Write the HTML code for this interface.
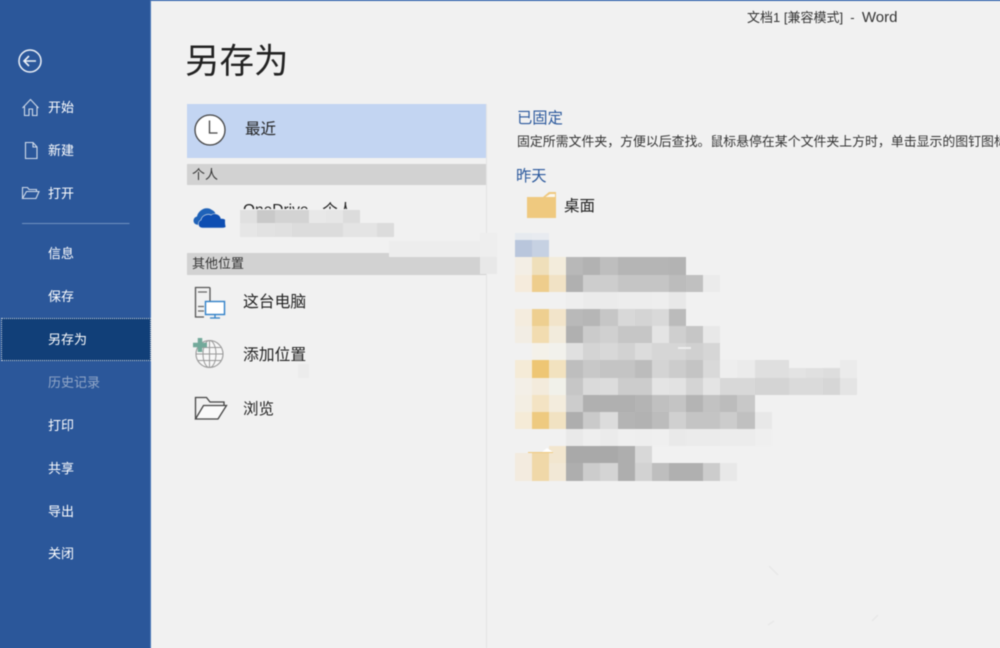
<!DOCTYPE html>
<html lang="zh">
<head>
<meta charset="utf-8">
<title>另存为</title>
<style>
html,body{margin:0;padding:0;width:1000px;height:648px;overflow:hidden;background:#f1f1f1}
body{font-family:"Liberation Sans","Noto Sans CJK SC",sans-serif;position:relative}
#root{position:absolute;left:0;top:0;width:1000px;height:648px;filter:blur(.4px);background:#f1f1f1}
.a{position:absolute;white-space:nowrap}
.n{position:absolute;left:48px;font-size:13px;line-height:20px;color:#fff}
svg{position:absolute;overflow:visible}
</style>
</head>
<body>
<div id="root">
<div class="a" style="left:-10px;top:-10px;width:1020px;height:11px;background:#3f6db0"></div>
<div class="a" style="left:-10px;top:-10px;width:161px;height:668px;background:#2b579a"></div>
<div class="a" style="left:150px;top:0;width:1px;height:658px;background:#4a78b8"></div>

<svg style="left:0;top:0" width="151" height="240" fill="none" stroke="#eef2f8">
<circle cx="30" cy="61" r="11" stroke-width="1.500"/>
<path d="M36 61H24.500M29 56l-5 5 5 5" stroke-width="1.600"/>
<path d="M22.500 108l8-8.500 8 8.500M24.500 106.500v9h4.500v-6.500h3.500v6.500h4.500v-9" stroke="#d2dcea" stroke-width="1.100"/>
<path d="M25.500 142.500h7.500l4 4.500v11.500h-11.500zM33 142.500v4.500h4" stroke="#d2dcea" stroke-width="1.100"/>
<path d="M22.500 198.500v-11h5l1.500 2h7.500v2M22.500 198.500l4-7h12.500l-3 7z" stroke="#d2dcea" stroke-width="1.100"/>
<path d="M22 223.500h107.500" stroke="#6f91c0" stroke-width="1"/>
</svg>

<div class="n" style="top:98px">开始</div>
<div class="n" style="top:141px">新建</div>
<div class="n" style="top:184px">打开</div>
<div class="n" style="top:244px">信息</div>
<div class="n" style="top:287px">保存</div>
<div class="a" style="left:1px;top:318px;width:148px;height:41px;background:#113f78;border:1px dotted #d6dde6"></div>
<div class="n" style="top:330px">另存为</div>
<div class="n" style="top:373px;color:#93a8c8">历史记录</div>
<div class="n" style="top:416px">打印</div>
<div class="n" style="top:459px">共享</div>
<div class="n" style="top:502px">导出</div>
<div class="n" style="top:544px">关闭</div>

<div class="a" style="left:747px;top:8px;font-size:13px;line-height:20px;color:#333">文档1 [兼容模式]&nbsp; -&nbsp; <span style="font-size:15px">Word</span></div>
<div class="a" style="left:185px;top:37px;font-size:34.500px;line-height:50px;color:#222">另存为</div>

<div class="a" style="left:486px;top:104px;width:1px;height:554px;background:#e4e4e4"></div>

<div class="a" style="left:187px;top:104px;width:299px;height:54px;background:#c3d5f2"></div>
<svg style="left:187px;top:104px" width="50" height="54" fill="none">
<circle cx="23" cy="26" r="15" fill="#fff" stroke="#444" stroke-width="1.300"/>
<path d="M22.500 16.500v12.500h8" stroke="#444" stroke-width="1.300"/>
</svg>
<div class="a" style="left:245px;top:119px;font-size:15.500px;line-height:22px;color:#222">最近</div>

<div class="a" style="left:187px;top:164px;width:299px;height:21px;background:#d2d2d2"></div>
<div class="a" style="left:192px;top:165px;font-size:13px;line-height:20px;color:#333">个人</div>

<svg style="left:193px;top:207px" width="36" height="22">
<path d="M3.500 17.500C-.5 16.500-.5 10.500 4 9.500 5 3.500 13-1.500 19 3c2 1 3 2 3.500 4L9 19z" fill="#1f62b8"/>
<path d="M9.500 21C4.500 21 4 14.500 8 13c.5-4 6-7 10-5 3-2.500 9-1 10 3.500 4.500-.5 7 3 6 6.500-.5 2-2 3-4 3z" fill="#0e4eb2" stroke="#f1f1f1" stroke-width=".6"/>
</svg>
<div class="a" style="left:243px;top:200px;font-size:15.500px;line-height:22px;color:#222">OneDrive - 个人</div>

<div class="a" style="left:187px;top:253px;width:299px;height:22px;background:#d2d2d2"></div>
<div class="a" style="left:192px;top:254px;font-size:13px;line-height:20px;color:#333">其他位置</div>

<svg style="left:190px;top:284px" width="40" height="36" fill="none">
<path d="M14 33H5.500V3.500h13.500a1 1 0 0 1 1 1V17" stroke="#555" stroke-width="1.300"/>
<path d="M8 8h9M8 22.500h6M8 27h6" stroke="#666" stroke-width="1.200"/>
<rect x="15.500" y="17.500" width="19" height="13" fill="#fff" stroke="#2f80c8" stroke-width="1.400"/>
<path d="M25 31v2.500M20 34h10" stroke="#2f80c8" stroke-width="1.300"/>
</svg>
<div class="a" style="left:243px;top:292px;font-size:15.800px;line-height:22px;color:#222">这台电脑</div>

<svg style="left:190px;top:335px" width="44" height="36" fill="none">
<circle cx="19.500" cy="19" r="13.500" fill="#f7f7f7" stroke="#999" stroke-width="1.100"/>
<ellipse cx="19.500" cy="19" rx="6.500" ry="13.500" stroke="#999"/>
<path d="M19.500 5.500v27M6 19h27M8 12.500h23M8 25.500h23" stroke="#999"/>
<path d="M10 3v14M3 10h14" stroke="#72a99a" stroke-width="4.500"/>
</svg>
<div class="a" style="left:243px;top:345px;font-size:15.800px;line-height:22px;color:#222">添加位置</div>

<svg style="left:190px;top:392px" width="44" height="32" fill="none" stroke="#444" stroke-width="1.300">
<path d="M5.500 26.500V5.500h11l3.500 4.500h14v3"/>
<path d="M13.500 13.500h23l-8.500 13.500H5.500z" fill="#fafafa"/>
</svg>
<div class="a" style="left:243px;top:399px;font-size:15.500px;line-height:22px;color:#222">浏览</div>

<div class="a" style="left:517px;top:108px;font-size:15.300px;line-height:22px;color:#2a589c">已固定</div>
<div class="a" style="left:517px;top:132px;font-size:12.900px;line-height:20px;color:#333">固定所需文件夹，方便以后查找。鼠标悬停在某个文件夹上方时，单击显示的图钉图标</div>
<div class="a" style="left:516px;top:166px;font-size:15.300px;line-height:22px;color:#2a589c">昨天</div>
<svg style="left:527px;top:192px" width="30" height="27">
<path d="M0 5h16l6-5h7v26H0z" fill="#efc97f"/>
<path d="M18.500 5l4.500-3h5v3z" fill="#fbf7ee"/>
</svg>
<div class="a" style="left:564px;top:196px;font-size:15.500px;line-height:22px;color:#222">桌面</div>

<!-- smudges -->
<svg style="left:0;top:0" width="1000" height="648" shape-rendering="crispEdges">
<path d="M240 209h155v28h-120c-20 0-40-1-42-5-5-1-8-3-8-10 0-8 8-13 15-13z" fill="#f1f1f1" shape-rendering="auto"/>
<path d="M395 238l-30-1 24 3z" fill="#f1f1f1" shape-rendering="auto"/>
<rect x="240" y="210" width="17" height="13" fill="#e0e0e0"/><rect x="257" y="210" width="18" height="13" fill="#c9c9c9"/><rect x="275" y="210" width="17" height="13" fill="#d3d3d3"/><rect x="292" y="210" width="17" height="13" fill="#d3d3d3"/><rect x="309" y="210" width="17" height="13" fill="#e8e8e8"/><rect x="326" y="210" width="17" height="13" fill="#e6e6e6"/><rect x="343" y="210" width="17" height="13" fill="#dcdcdc"/>
<rect x="240" y="223" width="17" height="14" fill="#e6e6e6"/><rect x="257" y="223" width="18" height="14" fill="#e2e2e2"/><rect x="275" y="223" width="17" height="14" fill="#e0e0e0"/><rect x="292" y="223" width="17" height="14" fill="#dcdcdc"/><rect x="309" y="223" width="17" height="14" fill="#dcdcdc"/><rect x="326" y="223" width="17" height="14" fill="#dcdcdc"/><rect x="343" y="223" width="17" height="14" fill="#e4e4e4"/><rect x="360" y="223" width="17" height="14" fill="#e4e4e4"/><rect x="377" y="223" width="17" height="14" fill="#dcdcdc"/>
<rect x="389" y="241" width="91" height="16" fill="#ededed"/>
<rect x="480" y="233" width="17" height="24" fill="#eeeeee"/>
<rect x="480" y="257" width="17" height="17" fill="#e8e8e8"/>
<rect x="298" y="364" width="11" height="14" fill="#ececec"/>

<!-- mosaic -->
<rect x="515" y="233" width="17" height="7" fill="#e6eaef"/><rect x="532" y="233" width="17" height="7" fill="#e8ebf0"/>
<rect x="515" y="240" width="17" height="17" fill="#b9c6dc"/><rect x="532" y="240" width="17" height="17" fill="#c6d1e2"/>

<g id="r1">
<rect x="515" y="257" width="17" height="18" fill="#f3eee5"/><rect x="532" y="257" width="17" height="18" fill="#efdfba"/><rect x="549" y="257" width="17" height="18" fill="#f3ecdc"/><rect x="566" y="257" width="17" height="18" fill="#b8b8b8"/><rect x="583" y="257" width="17" height="18" fill="#b2b2b2"/><rect x="600" y="257" width="18" height="18" fill="#bebebe"/><rect x="618" y="257" width="17" height="18" fill="#b5b5b5"/><rect x="635" y="257" width="17" height="18" fill="#b5b5b5"/><rect x="652" y="257" width="17" height="18" fill="#b5b5b5"/><rect x="669" y="257" width="17" height="18" fill="#b3b3b3"/>
<rect x="515" y="275" width="17" height="17" fill="#f5ebdc"/><rect x="532" y="275" width="17" height="17" fill="#eecd8c"/><rect x="549" y="275" width="17" height="17" fill="#f1e2c5"/><rect x="566" y="275" width="17" height="17" fill="#b0b0b0"/><rect x="583" y="275" width="17" height="17" fill="#cdcdcd"/><rect x="600" y="275" width="18" height="17" fill="#cdcdcd"/><rect x="618" y="275" width="17" height="17" fill="#c5c5c5"/><rect x="635" y="275" width="17" height="17" fill="#c5c5c5"/><rect x="652" y="275" width="17" height="17" fill="#c5c5c5"/><rect x="669" y="275" width="17" height="17" fill="#bcbcbc"/><rect x="686" y="275" width="17" height="17" fill="#c0c0c0"/><rect x="703" y="275" width="17" height="17" fill="#ebebeb"/>
<rect x="566" y="292" width="17" height="17" fill="#eeeeee"/><rect x="583" y="292" width="17" height="17" fill="#ebebeb"/><rect x="600" y="292" width="18" height="17" fill="#ebebeb"/><rect x="618" y="292" width="17" height="17" fill="#ededed"/><rect x="635" y="292" width="17" height="17" fill="#ededed"/><rect x="652" y="292" width="17" height="17" fill="#eeeeee"/><rect x="669" y="292" width="17" height="17" fill="#e8e8e8"/>
<rect x="515" y="309" width="17" height="17" fill="#f4ecde"/><rect x="532" y="309" width="17" height="17" fill="#eecf90"/><rect x="549" y="309" width="17" height="17" fill="#f2e4ca"/><rect x="566" y="309" width="17" height="17" fill="#b9b9b9"/><rect x="583" y="309" width="17" height="17" fill="#b6b6b6"/><rect x="600" y="309" width="18" height="17" fill="#c6c6c6"/><rect x="618" y="309" width="17" height="17" fill="#d8d8d8"/><rect x="635" y="309" width="17" height="17" fill="#d4d4d4"/><rect x="652" y="309" width="17" height="17" fill="#d9d9d9"/><rect x="669" y="309" width="17" height="17" fill="#bbbbbb"/>
<rect x="515" y="326" width="17" height="17" fill="#f2ede4"/><rect x="532" y="326" width="17" height="17" fill="#f2dcb0"/><rect x="549" y="326" width="17" height="17" fill="#f2ebdc"/><rect x="566" y="326" width="17" height="17" fill="#b0b0b0"/><rect x="583" y="326" width="17" height="17" fill="#cbcbcb"/><rect x="600" y="326" width="18" height="17" fill="#d0d0d0"/><rect x="618" y="326" width="17" height="17" fill="#c6c6c6"/><rect x="635" y="326" width="17" height="17" fill="#c6c6c6"/><rect x="652" y="326" width="17" height="17" fill="#e4e4e4"/><rect x="669" y="326" width="17" height="17" fill="#cfcfcf"/><rect x="686" y="326" width="17" height="17" fill="#c6c6c6"/><rect x="703" y="326" width="17" height="17" fill="#e8e8e8"/>
<rect x="532" y="343" width="17" height="17" fill="#f4f1e9"/><rect x="549" y="343" width="17" height="17" fill="#f2f1ec"/><rect x="566" y="343" width="17" height="17" fill="#e0e0e0"/><rect x="583" y="343" width="17" height="17" fill="#d4d4d4"/><rect x="600" y="343" width="18" height="17" fill="#d8d8d8"/><rect x="618" y="343" width="17" height="17" fill="#d2d2d2"/><rect x="635" y="343" width="17" height="17" fill="#dcdcdc"/><rect x="652" y="343" width="17" height="17" fill="#d6d6d6"/><rect x="669" y="343" width="17" height="17" fill="#d6d6d6"/><rect x="686" y="343" width="17" height="17" fill="#d0d0d0"/><rect x="703" y="343" width="17" height="17" fill="#d6d6d6"/>
<rect x="678" y="347" width="13" height="2" fill="#ececec"/>
<rect x="515" y="360" width="17" height="18" fill="#f5ebd7"/><rect x="532" y="360" width="17" height="18" fill="#eec674"/><rect x="549" y="360" width="17" height="18" fill="#f2e2bf"/><rect x="566" y="360" width="17" height="18" fill="#bebebe"/><rect x="583" y="360" width="17" height="18" fill="#c8c8c8"/><rect x="600" y="360" width="18" height="18" fill="#c4c4c4"/><rect x="618" y="360" width="17" height="18" fill="#c4c4c4"/><rect x="635" y="360" width="17" height="18" fill="#bcbcbc"/><rect x="652" y="360" width="17" height="18" fill="#d4d4d4"/><rect x="669" y="360" width="17" height="18" fill="#cccccc"/><rect x="686" y="360" width="17" height="18" fill="#c4c4c4"/><rect x="703" y="360" width="17" height="18" fill="#d9d9d9"/><rect x="720" y="360" width="17" height="18" fill="#eeeeee"/><rect x="737" y="360" width="18" height="18" fill="#ebebeb"/><rect x="755" y="360" width="17" height="18" fill="#dfdfdf"/><rect x="772" y="360" width="17" height="18" fill="#dfdfdf"/><rect x="789" y="368" width="17" height="10" fill="#e3e3e3"/><rect x="806" y="368" width="17" height="10" fill="#e0e0e0"/><rect x="823" y="368" width="17" height="10" fill="#dddddd"/><rect x="840" y="360" width="17" height="18" fill="#ebebeb"/>
<rect x="515" y="378" width="17" height="17" fill="#f3efe7"/><rect x="532" y="378" width="17" height="17" fill="#f3ebdc"/><rect x="549" y="378" width="17" height="17" fill="#f1f1ea"/><rect x="566" y="378" width="17" height="17" fill="#c6c6c6"/><rect x="583" y="378" width="17" height="17" fill="#dadada"/><rect x="600" y="378" width="18" height="17" fill="#dcdcdc"/><rect x="618" y="378" width="17" height="17" fill="#cccccc"/><rect x="635" y="378" width="17" height="17" fill="#cccccc"/><rect x="652" y="378" width="17" height="17" fill="#e4e4e4"/><rect x="669" y="378" width="17" height="17" fill="#e2e2e2"/><rect x="686" y="378" width="17" height="17" fill="#d4d4d4"/><rect x="703" y="378" width="17" height="17" fill="#e4e4e4"/><rect x="720" y="378" width="17" height="17" fill="#d8d8d8"/><rect x="737" y="378" width="18" height="17" fill="#d8d8d8"/><rect x="755" y="378" width="17" height="17" fill="#d4d4d4"/><rect x="772" y="378" width="17" height="17" fill="#d4d4d4"/><rect x="789" y="378" width="17" height="17" fill="#dadada"/><rect x="806" y="378" width="17" height="17" fill="#dadada"/><rect x="823" y="378" width="17" height="17" fill="#d6d6d6"/><rect x="840" y="378" width="17" height="17" fill="#e4e4e4"/>
<rect x="515" y="395" width="17" height="17" fill="#f3eee3"/><rect x="532" y="395" width="17" height="17" fill="#f3e3c3"/><rect x="549" y="395" width="17" height="17" fill="#f3ecdd"/><rect x="566" y="395" width="17" height="17" fill="#cccccc"/><rect x="583" y="395" width="17" height="17" fill="#b0b0b0"/><rect x="600" y="395" width="18" height="17" fill="#b0b0b0"/><rect x="618" y="395" width="17" height="17" fill="#b0b0b0"/><rect x="635" y="395" width="17" height="17" fill="#b4b4b4"/><rect x="652" y="395" width="17" height="17" fill="#c0c0c0"/><rect x="669" y="395" width="17" height="17" fill="#c4c4c4"/><rect x="686" y="395" width="17" height="17" fill="#b4b4b4"/><rect x="703" y="395" width="17" height="17" fill="#c2c2c2"/><rect x="720" y="395" width="17" height="17" fill="#bcbcbc"/><rect x="737" y="395" width="18" height="17" fill="#c8c8c8"/>
<rect x="515" y="412" width="17" height="17" fill="#f5ebd7"/><rect x="532" y="412" width="17" height="17" fill="#eeca80"/><rect x="549" y="412" width="17" height="17" fill="#f1e2c2"/><rect x="566" y="412" width="17" height="17" fill="#aeaeae"/><rect x="583" y="412" width="17" height="17" fill="#cacaca"/><rect x="600" y="412" width="18" height="17" fill="#dcdcdc"/><rect x="618" y="412" width="17" height="17" fill="#b4b4b4"/><rect x="635" y="412" width="17" height="17" fill="#b2b2b2"/><rect x="652" y="412" width="17" height="17" fill="#bcbcbc"/><rect x="669" y="412" width="17" height="17" fill="#d0d0d0"/><rect x="686" y="412" width="17" height="17" fill="#c4c4c4"/><rect x="703" y="412" width="17" height="17" fill="#c4c4c4"/><rect x="720" y="412" width="17" height="17" fill="#cccccc"/><rect x="737" y="412" width="18" height="17" fill="#c0c0c0"/><rect x="755" y="412" width="17" height="17" fill="#e8e8e8"/>
<rect x="566" y="429" width="17" height="17" fill="#e9e9e9"/><rect x="583" y="429" width="17" height="17" fill="#eeeeee"/><rect x="600" y="429" width="18" height="17" fill="#ebebeb"/><rect x="618" y="429" width="17" height="17" fill="#efefef"/><rect x="635" y="429" width="17" height="17" fill="#eeeeee"/><rect x="652" y="429" width="17" height="17" fill="#efefef"/><rect x="669" y="429" width="17" height="17" fill="#e9e9e9"/><rect x="686" y="429" width="17" height="17" fill="#ebebeb"/><rect x="703" y="429" width="17" height="17" fill="#ebebeb"/><rect x="720" y="429" width="17" height="17" fill="#ececec"/><rect x="737" y="429" width="18" height="17" fill="#ececec"/><rect x="755" y="429" width="17" height="17" fill="#efefef"/>
<rect x="549" y="446" width="17" height="17" fill="#f2e6cf"/><rect x="566" y="446" width="17" height="17" fill="#a9a9a9"/><rect x="583" y="446" width="17" height="17" fill="#a9a9a9"/><rect x="600" y="446" width="18" height="17" fill="#a9a9a9"/><rect x="618" y="446" width="17" height="17" fill="#aeaeae"/><rect x="635" y="446" width="17" height="17" fill="#d8d8d8"/>
<rect x="515" y="453" width="17" height="10" fill="#f3ebdf"/><rect x="532" y="453" width="17" height="10" fill="#f0d8a8"/>
<rect x="515" y="463" width="17" height="18" fill="#f3ebdf"/><rect x="532" y="463" width="17" height="18" fill="#f0d8a8"/><rect x="549" y="463" width="17" height="18" fill="#f2e8d6"/><rect x="566" y="463" width="17" height="18" fill="#aeaeae"/><rect x="583" y="463" width="17" height="18" fill="#cccccc"/><rect x="600" y="463" width="18" height="18" fill="#d4d4d4"/><rect x="618" y="463" width="17" height="18" fill="#aeaeae"/><rect x="635" y="463" width="17" height="18" fill="#d2d2d2"/><rect x="652" y="463" width="17" height="18" fill="#bebebe"/><rect x="669" y="463" width="17" height="18" fill="#b0b0b0"/><rect x="686" y="463" width="17" height="18" fill="#b0b0b0"/><rect x="703" y="463" width="17" height="18" fill="#cccccc"/><rect x="720" y="463" width="17" height="18" fill="#e8e8e8"/>
</g>
<path d="M542 452l5-4 6 4z" fill="#fff" shape-rendering="auto"/>
<rect x="528" y="452" width="25" height="1" fill="#efc97f"/>
<path d="M769 566l9 9M768 625l6-4M872 621l6-6" stroke="#e8e8e8" stroke-width="1.500" shape-rendering="auto"/>
</svg>
</div>
</body>
</html>
